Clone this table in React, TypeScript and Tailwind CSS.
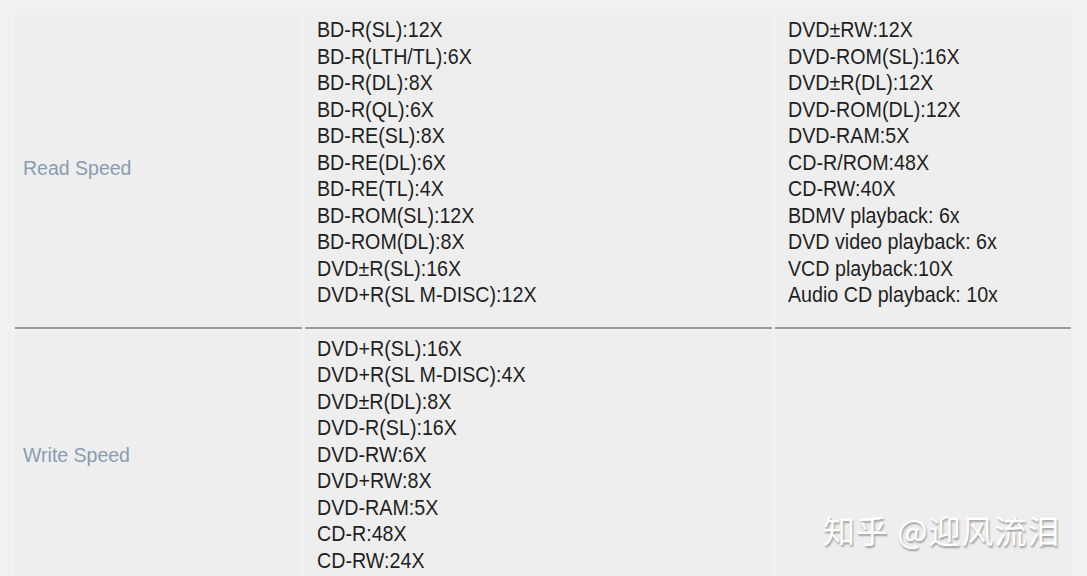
const readMain = [
  "BD-R(SL):12X",
  "BD-R(LTH/TL):6X",
  "BD-R(DL):8X",
  "BD-R(QL):6X",
  "BD-RE(SL):8X",
  "BD-RE(DL):6X",
  "BD-RE(TL):4X",
  "BD-ROM(SL):12X",
  "BD-ROM(DL):8X",
  "DVD±R(SL):16X",
  "DVD+R(SL M-DISC):12X",
];

const readExtra = [
  "DVD±RW:12X",
  "DVD-ROM(SL):16X",
  "DVD±R(DL):12X",
  "DVD-ROM(DL):12X",
  "DVD-RAM:5X",
  "CD-R/ROM:48X",
  "CD-RW:40X",
  "BDMV playback: 6x",
  "DVD video playback: 6x",
  "VCD playback:10X",
  "Audio CD playback: 10x",
];

const writeMain = [
  "DVD+R(SL):16X",
  "DVD+R(SL M-DISC):4X",
  "DVD±R(DL):8X",
  "DVD-R(SL):16X",
  "DVD-RW:6X",
  "DVD+RW:8X",
  "DVD-RAM:5X",
  "CD-R:48X",
  "CD-RW:24X",
];

// the spec sheet uses a condensed face; squeeze Liberation Sans to match
const valueFont =
  "origin-left scale-x-[0.915] font-['Liberation_Sans',sans-serif] text-[21.5px] leading-[26.5px] text-[#1f1f1f]";

function Lines({ items }: { items: string[] }) {
  return (
    <div className={valueFont}>
      {items.map((t) => (
        <div key={t} className="whitespace-nowrap">
          {t}
        </div>
      ))}
    </div>
  );
}

export default function App() {
  return (
    <div className="relative w-[1087px] h-[576px] overflow-hidden bg-[#f1f1f1] pt-[15px] pl-[15px]">
      <div className="grid grid-cols-[287px_467px_296px] gap-x-[3px] gap-y-[2px]">
        {/* Read speed row */}
        <div className="flex items-center bg-[#eeeeee] border-b-2 border-[#9b9b9b] pl-[8px]">
          <span className="pb-[5px] font-['Liberation_Sans',sans-serif] text-[19.5px] leading-[24px] text-[#8a9bb3]">
            Read Speed
          </span>
        </div>
        <div className="bg-[#eeeeee] border-b-2 border-[#9b9b9b] pl-[12px] pt-[2px] pb-[18px]">
          <Lines items={readMain} />
        </div>
        <div className="bg-[#eeeeee] border-b-2 border-[#9b9b9b] pl-[13px] pt-[2px] pb-[18px]">
          <Lines items={readExtra} />
        </div>

        {/* Write speed row */}
        <div className="flex items-center bg-[#eeeeee] pl-[8px]">
          <span className="pb-[12px] font-['Liberation_Sans',sans-serif] text-[19.5px] leading-[24px] text-[#8a9bb3]">
            Write Speed
          </span>
        </div>
        <div className="bg-[#eeeeee] pl-[12px] pt-[5px] pb-[18px]">
          <Lines items={writeMain} />
        </div>
        <div className="bg-[#eeeeee]" />
      </div>

      <div className="absolute left-[823px] top-[513px] whitespace-nowrap font-['Noto_Sans_CJK_SC',sans-serif] text-[32px] leading-none tracking-[1px] text-white [text-shadow:1px_2px_2px_rgba(0,0,0,0.35)]">
        知乎 @迎风流泪
      </div>
    </div>
  );
}
